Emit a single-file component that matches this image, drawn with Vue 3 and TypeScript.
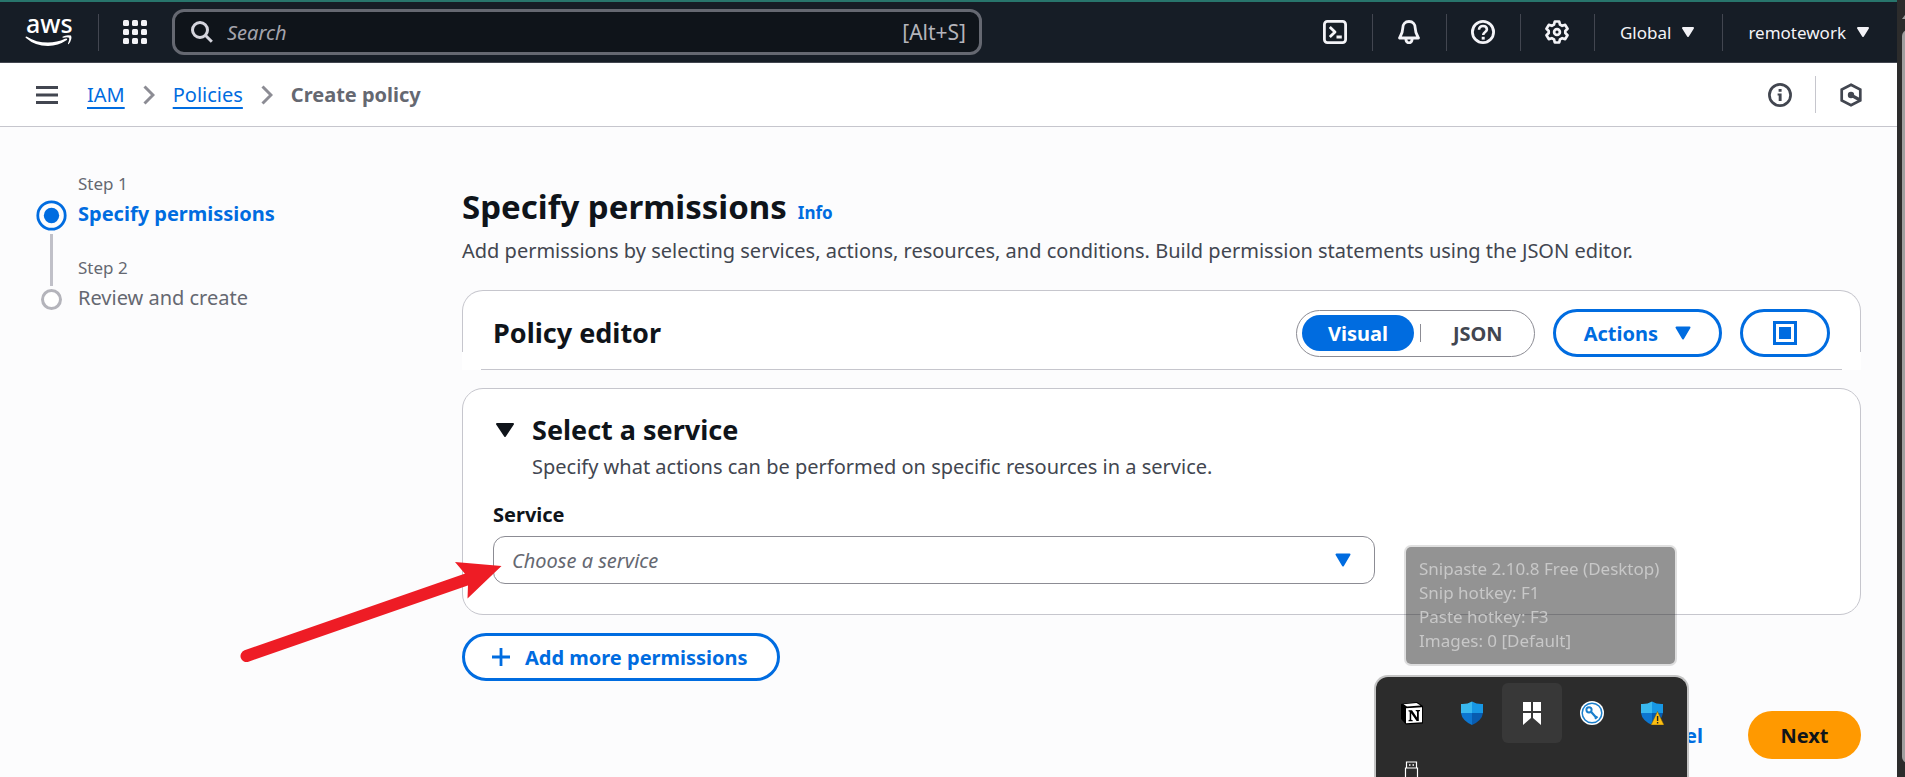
<script setup lang="ts">
import { ref } from 'vue'

interface Step {
  label: string
  title: string
  current: boolean
}

const steps: Step[] = [
  { label: 'Step 1', title: 'Specify permissions', current: true },
  { label: 'Step 2', title: 'Review and create', current: false },
]

const tooltipLines: string[] = [
  'Snipaste 2.10.8 Free (Desktop)',
  'Snip hotkey: F1',
  'Paste hotkey: F3',
  'Images: 0 [Default]',
]

const dots: number[] = [0, 9, 18]
const mode = ref<'visual' | 'json'>('visual')
const query = ref('')
const service = ref('')
</script>

<template>
  <div class="window">
    <div class="page">
      <header class="topbar">
        <a class="logo" href="#" aria-label="AWS home">
          <svg width="48" height="60" viewBox="0 -14 48 60">
            <text class="logo-text" x="1" y="17">aws</text>
            <path d="M0.500 21 Q1 20 2 20.700 Q11 26.500 23 26.600 Q32 26.600 40 22.800 Q42 22 42.200 23.200 Q42.200 23.800 41 24.600 Q33.500 29.800 23 30 Q10 30 1 22 Q0.400 21.500 0.500 21 Z" fill="#fff" />
            <path d="M37.500 20.800 Q41 18.600 46 19.600 Q47.600 23 43.800 28 Q42.900 28.600 43 27.600 Q44.800 23.500 44.200 21.700 Q42.500 20.900 38.200 21.700 Q37 21.600 37.500 20.800 Z" fill="#fff" />
          </svg>
        </a>
        <span class="divider"></span>
        <button class="icon-button apps" type="button" aria-label="Services">
          <svg width="24" height="24" viewBox="0 0 24 24" fill="#f3f3f7">
            <template v-for="y in dots" :key="y">
              <rect v-for="x in dots" :key="x" :x="x" :y="y" width="6" height="6" rx="1.500" />
            </template>
          </svg>
        </button>
        <label class="search">
          <svg width="22" height="22" viewBox="0 0 22 22" fill="none" stroke="#d5d5dd" stroke-width="3">
            <circle cx="9" cy="9" r="7.500" />
            <path d="M14.300 14.300 L20.800 20.800" />
          </svg>
          <input v-model="query" type="text" placeholder="Search" aria-label="Search" />
          <span class="shortcut">[Alt+S]</span>
        </label>

        <div class="tools">
          <button class="tool" type="button" aria-label="CloudShell">
            <svg width="24" height="24" viewBox="0 0 24 24" fill="none" stroke="#f3f3f7" stroke-width="2.800" stroke-linejoin="round">
              <rect x="1.400" y="1.400" width="21.200" height="21.200" rx="3" />
              <path d="M6.800 7 L12 12 L6.800 17 M13.500 17 H18.800" />
            </svg>
          </button>
          <button class="tool" type="button" aria-label="Notifications">
            <svg width="24" height="24" viewBox="0 0 24 24" fill="none" stroke="#f3f3f7" stroke-width="2.800" stroke-linejoin="round">
              <path d="M12 1.500 C8 1.500 5.800 4.300 5.800 8 C5.800 12.500 4.500 14.500 2.500 18 H21.500 C19.500 14.500 18.200 12.500 18.200 8 C18.200 4.300 16 1.500 12 1.500 Z" />
              <path d="M8.800 18.500 C9 21.500 10.500 22.800 12 22.800 C13.500 22.800 15 21.500 15.200 18.500" />
            </svg>
          </button>
          <button class="tool" type="button" aria-label="Help">
            <svg width="24" height="24" viewBox="0 0 24 24" fill="none" stroke="#f3f3f7" stroke-width="2.800">
              <circle cx="12" cy="12" r="10.600" />
              <path d="M8 9.800 C8 7.400 9.700 6 12 6 C14.300 6 15.900 7.400 15.900 9.500 C15.900 12 12.200 12 12.200 15" stroke-width="2.600" />
              <path d="M10.700 16.800 H13.700 V19.600 H10.700 Z" fill="#f3f3f7" stroke="none" />
            </svg>
          </button>
          <button class="tool" type="button" aria-label="Settings">
            <svg width="24" height="24" viewBox="0 0 24 24" fill="none" stroke="#f3f3f7" stroke-width="2.700" stroke-linejoin="round">
              <path d="M9.800 1.500 H14.200 L15 4.600 L17.200 5.800 L20.200 4.900 L22.500 8.700 L20.300 11 V13 L22.500 15.300 L20.200 19.100 L17.200 18.200 L15 19.400 L14.200 22.500 H9.800 L9 19.400 L6.800 18.200 L3.800 19.100 L1.500 15.300 L3.700 13 V11 L1.500 8.700 L3.800 4.900 L6.800 5.800 L9 4.600 Z" />
              <circle cx="12" cy="12" r="2.900" />
            </svg>
          </button>
          <button class="menu" type="button">
            Global
            <svg width="12" height="10" viewBox="0 0 12 10"><path class="tri light" d="M1 1 H11 L6 9 Z" /></svg>
          </button>
          <button class="menu" type="button">
            remotework
            <svg width="12" height="10" viewBox="0 0 12 10"><path class="tri light" d="M1 1 H11 L6 9 Z" /></svg>
          </button>
        </div>
      </header>

      <div class="crumbbar">
        <button class="icon-button" type="button" aria-label="Open navigation">
          <svg width="22" height="18" viewBox="0 0 22 18" fill="#424650">
            <rect width="22" height="3" /><rect y="7.500" width="22" height="3" /><rect y="15" width="22" height="3" />
          </svg>
        </button>
        <nav class="crumbs" aria-label="Breadcrumbs">
          <a href="#">IAM</a>
          <svg width="12" height="20" viewBox="0 0 12 20"><path d="M1.500 1.500 L10 10 L1.500 18.500" /></svg>
          <a href="#">Policies</a>
          <svg width="12" height="20" viewBox="0 0 12 20"><path d="M1.500 1.500 L10 10 L1.500 18.500" /></svg>
          <span>Create policy</span>
        </nav>
        <div class="panel-tools">
          <button class="icon-button" type="button" aria-label="Info panel">
            <svg width="24" height="24" viewBox="0 0 24 24" fill="none" stroke="#424650" stroke-width="2.700">
              <circle cx="12" cy="12" r="10.600" />
              <path d="M10.600 6 H13.600 V8.700 H10.600 Z M9.600 10.600 H13.600 V18 H10.700 V12.600 H9.600 Z" fill="#424650" stroke="none" />
            </svg>
          </button>
          <span class="divider"></span>
          <button class="icon-button" type="button" aria-label="Assistant">
            <svg width="24" height="24" viewBox="0 0 24 24" fill="none" stroke="#424650" stroke-width="2.700">
              <path d="M12 1.700 L21.300 6.600 V17.400 L12 22.300 L2.700 17.400 V6.600 Z" />
              <path d="M12.500 12.300 L21 17" stroke-width="3.200" />
              <circle cx="12" cy="12" r="3.200" fill="#424650" stroke="none" />
            </svg>
          </button>
        </div>
      </div>

      <div class="body">
        <nav class="steps" aria-label="Steps">
          <svg class="rail" width="31" height="111" viewBox="0 0 31 111" fill="none">
            <circle cx="15.500" cy="15.500" r="13.700" stroke="#006ce0" stroke-width="2.800" />
            <circle cx="15.500" cy="15.500" r="7.700" fill="#006ce0" />
            <path d="M15.500 34 V86" stroke="#c0c0c8" stroke-width="3" />
            <circle cx="15.500" cy="99.500" r="9" fill="#fff" stroke="#b4b4bb" stroke-width="3" />
          </svg>
          <ol>
            <li v-for="step in steps" :key="step.label" :class="{ current: step.current }">
              <span class="step-label">{{ step.label }}</span>
              <span class="step-title">{{ step.title }}</span>
            </li>
          </ol>
        </nav>

        <main>
          <div class="heading">
            <h1>Specify permissions</h1>
            <a href="#">Info</a>
          </div>
          <p class="lead">Add permissions by selecting services, actions, resources, and conditions. Build permission statements using the JSON editor.</p>

          <section class="editor">
            <h2>Policy editor</h2>
            <div class="segments">
              <button type="button" :class="{ on: mode === 'visual' }" @click="mode = 'visual'">Visual</button>
              <span></span>
              <button type="button" :class="{ on: mode === 'json' }" @click="mode = 'json'">JSON</button>
            </div>
            <button class="outline actions" type="button">
              Actions
              <svg width="16" height="14" viewBox="0 0 16 14"><path class="tri blue" d="M1.500 1.500 H14.500 L8 12.500 Z" /></svg>
            </button>
            <button class="outline square" type="button" aria-label="Full screen">
              <svg width="24" height="24" viewBox="0 0 24 24" fill="none">
                <rect x="1.500" y="1.500" width="21" height="21" stroke="#006ce0" stroke-width="3" />
                <rect x="6" y="6" width="12" height="12" fill="#006ce0" />
              </svg>
            </button>
          </section>

          <section class="card">
            <div class="card-head">
              <button class="icon-button toggle" type="button" aria-label="Collapse section">
                <svg width="18" height="14" viewBox="0 0 18 14"><path class="tri dark" d="M1 1 H17 L9 13 Z" /></svg>
              </button>
              <h2>Select a service</h2>
            </div>
            <p>Specify what actions can be performed on specific resources in a service.</p>
            <label for="service">Service</label>
            <div class="select">
              <select id="service" v-model="service">
                <option value="">Choose a service</option>
              </select>
              <svg class="select-caret" width="16" height="14" viewBox="0 0 16 14"><path class="tri blue" d="M1.500 1.500 H14.500 L8 12.500 Z" /></svg>
              <svg class="pointer" width="264" height="112" viewBox="0 0 264 112">
                <path d="M6.500 101 L228 24" stroke="#ee1c25" stroke-width="12" stroke-linecap="round" />
                <path d="M261.500 11 L215 7 L226 20 L228 30 L227.500 43.500 Z" fill="#ee1c25" />
              </svg>
            </div>
          </section>

          <button class="outline add" type="button">
            <svg width="18" height="18" viewBox="0 0 18 18"><path d="M9 0 V18 M0 9 H18" stroke="#006ce0" stroke-width="2.800" /></svg>
            Add more permissions
          </button>

          <div class="footer">
            <button class="cancel" type="button">Cancel</button>
            <button class="next" type="button">Next</button>
          </div>
        </main>
      </div>
    </div>

    <div class="scrollbar">
      <svg width="12" height="8" viewBox="0 0 12 8"><path d="M0 8 L6 0 L12 8 Z" fill="#9f9f9f" /></svg>
      <div class="thumb"></div>
    </div>

    <div class="tooltip" role="tooltip">
      <div v-for="line in tooltipLines" :key="line">{{ line }}</div>
    </div>

    <div class="tray">
      <button type="button" aria-label="Notion">
        <svg width="24" height="24" viewBox="0 0 24 24">
          <path d="M1 3 L17 1 L23 5 V22.500 L6 23.500 L1 18 Z" fill="#000" />
          <path d="M3.500 3.200 L16.500 2 L20.500 4.500 L7 5.500 Z M6 7.300 L22 6.300 V21.200 L6 22.300 Z" fill="#fff" />
          <path d="M8.500 9.300 H12 L17 16.500 V10.500 L15.700 10 V9 H20 V10 L18.800 10.500 V20 H16.600 L11.200 12.300 V18.800 L12.700 19.200 V20.200 H8.500 V19.200 L9.700 18.800 V10.800 L8.500 10.300 Z" fill="#000" />
        </svg>
      </button>
      <button type="button" aria-label="Windows Security">
        <svg width="24" height="24" viewBox="0 0 24 24">
          <path d="M1 3 Q7 3.500 12 0.500 V12 H1 Z" fill="#39b8ef" />
          <path d="M12 0.500 Q17 3.500 23 3 V12 H12 Z" fill="#1797e4" />
          <path d="M1 12 H12 V24 Q2 19.500 1 12 Z" fill="#0d76d0" />
          <path d="M12 12 H23 Q22 19.500 12 24 Z" fill="#085cb0" />
        </svg>
      </button>
      <button class="active" type="button" aria-label="Snipaste">
        <svg width="24" height="24" viewBox="0 0 24 24" fill="#fff">
          <path d="M3 1 H11 V10 H3 Z M13 1 H21 V10 H13 Z M3 12 H11 V17 L3 24 Z M13 12 H21 V24 L13 17 Z" />
        </svg>
      </button>
      <button type="button" aria-label="Key manager">
        <svg width="24" height="24" viewBox="0 0 24 24" fill="none">
          <circle cx="12" cy="12" r="12" fill="#fff" />
          <circle cx="12" cy="12" r="9.800" stroke="#1b7fcc" stroke-width="1.500" />
          <circle cx="9" cy="8.800" r="2.600" stroke="#1b7fcc" stroke-width="2" />
          <path d="M11 10.800 L16.800 17.200 M15 17.800 L17.500 15.500" stroke="#1b7fcc" stroke-width="2.200" />
        </svg>
      </button>
      <button type="button" aria-label="Security warning">
        <svg width="24" height="24" viewBox="0 0 24 24">
          <path d="M1 3 Q7 3.500 12 0.500 V12 H1 Z" fill="#39b8ef" />
          <path d="M12 0.500 Q17 3.500 23 3 V12 H12 Z" fill="#1797e4" />
          <path d="M1 12 H12 V24 Q2 19.500 1 12 Z" fill="#0d76d0" />
          <path d="M12 12 H23 Q22 19.500 12 24 Z" fill="#085cb0" />
          <path d="M17.500 10.500 L24 24 H11 Z" fill="#fdbf12" stroke="#7a5a00" stroke-width="0.500" />
          <path d="M16.900 15 H18.300 V20 H16.900 Z M16.900 21 H18.300 V22.500 H16.900 Z" fill="#222" />
        </svg>
      </button>
      <button type="button" aria-label="USB device">
        <svg width="24" height="24" viewBox="0 0 24 24" fill="none" stroke="#fff" stroke-width="1.200">
          <path d="M6.500 1 H16.500 V7 H6.500 Z M5.500 7 H17.500 V23 H5.500 Z" />
          <path d="M9 4 H10.500 M12.500 4 H14" stroke-width="1.600" />
        </svg>
      </button>
    </div>
  </div>
</template>

<style>
body {
  margin: 0;
  overflow: hidden;
}
</style>

<style scoped>
.window {
  display: flex;
  height: 100vh;
  overflow: hidden;
  font-family: "Noto Sans", "Open Sans", sans-serif;
  font-size: 20px;
  color: #424650;
  background: #fcfcfd;
}
.window * {
  box-sizing: border-box;
}
button,
input,
select {
  font: inherit;
  color: inherit;
}
button {
  display: flex;
  align-items: center;
  padding: 0;
  border: 0;
  background: none;
  cursor: pointer;
}
svg {
  display: block;
  flex: none;
}
h1,
h2,
p,
ol {
  margin: 0;
  padding: 0;
}
a {
  color: #006ce0;
}
.page {
  flex: 1;
  min-width: 0;
}
.tri {
  stroke-width: 2;
  stroke-linejoin: round;
}
.light {
  fill: #f3f3f7;
  stroke: #f3f3f7;
}
.blue {
  fill: #006ce0;
  stroke: #006ce0;
}
.dark {
  fill: #0f141a;
  stroke: #0f141a;
}

.topbar {
  display: flex;
  align-items: center;
  height: 63px;
  padding-left: 25px;
  border-top: 2px solid #28756c;
  border-bottom: 1px solid #424650;
  background: #161d26;
  color: #f3f3f7;
}
.logo-text {
  font-size: 25px;
  font-weight: 500;
  fill: #fff;
}
.divider {
  width: 1px;
  height: 37px;
  background: #424650;
}
.logo {
  margin-right: 25px;
}
.apps {
  margin: 0 25px 0 24px;
}
.search {
  display: flex;
  align-items: center;
  flex: 0 1 810px;
  height: 46px;
  padding: 0 13px 0 16px;
  border: 3px solid #656871;
  border-radius: 12px;
  background: #0f141a;
  color: #b4b4bb;
}
.search input {
  flex: 1;
  min-width: 0;
  height: 28px;
  margin-left: 14px;
  padding: 0;
  border: 0;
  outline: 0;
  background: none;
}
.search input::placeholder {
  font-style: italic;
  color: #a4a4ad;
  opacity: 1;
}
.shortcut {
  font-size: 21px;
  line-height: 28px;
}
.tools {
  display: flex;
  align-items: center;
  margin-left: auto;
}
.tool,
.menu {
  height: 37px;
}
.tool {
  justify-content: center;
  width: 74px;
}
.tool,
.menu {
  border-right: 1px solid #424650;
}
.menu {
  gap: 11px;
  padding: 0 28px 0 25px;
  font-size: 17px;
}
.menu:last-child {
  border-right: 0;
}

.crumbbar {
  display: flex;
  align-items: center;
  height: 64px;
  padding: 0 34px 0 36px;
  border-bottom: 1px solid #c6c6cd;
  background: #fff;
}
.crumbs {
  display: flex;
  align-items: center;
  gap: 18px;
  margin-left: 29px;
  line-height: 26px;
}
.crumbs a {
  text-decoration-thickness: 2px;
  text-underline-offset: 5px;
  text-decoration-skip-ink: none;
}
.crumbs path {
  fill: none;
  stroke: #8c8c94;
  stroke-width: 3;
}
.crumbs span {
  font-weight: 700;
  color: #656871;
}
.panel-tools {
  display: flex;
  align-items: center;
  gap: 23px;
  margin-left: auto;
}
.panel-tools .divider {
  background: #c6c6cd;
}

.body {
  display: grid;
  grid-template-columns: 426px minmax(0, 1fr);
  padding: 0 36px;
}
.steps {
  display: flex;
  align-items: flex-start;
  gap: 11px;
  padding-top: 44px;
}
.rail {
  margin-top: 29px;
}
.steps ol {
  display: grid;
  gap: 24px;
  list-style: none;
  color: #656871;
}
.steps li {
  display: grid;
}
.step-label {
  font-size: 17px;
  line-height: 26px;
}
.step-title {
  line-height: 34px;
}
.current .step-title {
  font-weight: 700;
  color: #006ce0;
}

main {
  padding-top: 60px;
}
.heading {
  display: flex;
  align-items: baseline;
  gap: 11px;
}
h1 {
  font-size: 33px;
  line-height: 40px;
  color: #0f141a;
}
.heading a {
  font-size: 17px;
  font-weight: 700;
  text-decoration: none;
}
.lead {
  margin: 9px 0 24px;
  line-height: 30px;
}
h2 {
  font-size: 27px;
  line-height: 34px;
  color: #0f141a;
}
.editor {
  position: relative;
  z-index: 0;
  display: flex;
  align-items: center;
  gap: 18px;
  padding: 18px 30px 13px;
  border: 1px solid #c6c6cd;
  border-bottom: 0;
  border-radius: 21px 21px 0 0;
  background: #fff;
}
.editor::before {
  content: "";
  position: absolute;
  z-index: -1;
  inset: auto -1px 0;
  height: 18px;
  background: #fff;
}
.editor::after {
  content: "";
  position: absolute;
  inset: auto 18px 0;
  height: 1px;
  background: #c6c6cd;
}
.editor h2 {
  margin-right: auto;
}
.segments {
  display: flex;
  align-items: center;
  height: 47px;
  padding: 0 5px;
  border: 1px solid #8c8c94;
  border-radius: 24px;
}
.segments button {
  height: 36px;
  padding: 0 26px;
  border-radius: 18px;
  font-weight: 700;
}
.segments .on {
  background: #006ce0;
  color: #fff;
}
.segments span {
  width: 1px;
  height: 18px;
  margin: 0 6px;
  background: #8c8c94;
}
.outline {
  height: 48px;
  border: 3px solid #006ce0;
  border-radius: 24px;
  background: #fff;
  font-weight: 700;
  color: #006ce0;
}
.actions {
  gap: 17px;
  padding: 0 28px;
}
.square {
  padding: 0 30px;
}

.card {
  margin: 18px 0;
  padding: 24px 30px 30px;
  border: 1px solid #c6c6cd;
  border-radius: 21px;
  background: #fff;
}
.card-head {
  display: flex;
  align-items: center;
  gap: 18px;
  padding-left: 3px;
}
.card p {
  margin: 5px 0 19px 39px;
  line-height: 30px;
}
.card label {
  display: block;
  margin-bottom: 7px;
  line-height: 28px;
  font-weight: 700;
  color: #0f141a;
}
.select {
  position: relative;
  width: 66%;
}
.select select {
  display: block;
  width: 100%;
  height: 48px;
  padding: 0 60px 0 18px;
  border: 1px solid #8c8c94;
  border-radius: 12px;
  appearance: none;
  background: #fff;
  font-style: italic;
  color: #656871;
}
.select-caret {
  position: absolute;
  top: 17px;
  right: 24px;
}
.pointer {
  position: absolute;
  top: 19px;
  right: calc(100% - 11px);
  fill: none;
  pointer-events: none;
}
.add {
  gap: 15px;
  padding: 0 29px 0 27px;
}
.footer {
  display: flex;
  justify-content: flex-end;
  align-items: center;
  gap: 45px;
  margin-top: 30px;
  font-weight: 700;
}
.cancel {
  color: #006ce0;
}
.next {
  justify-content: center;
  width: 113px;
  height: 48px;
  border-radius: 24px;
  background: #ff9900;
  color: #0f141a;
}

.scrollbar {
  width: 8px;
  padding: 11px 0 14px 5px;
  overflow: hidden;
  display: flex;
  flex-direction: column;
  gap: 11px;
  background: #2c2c2c;
}
.thumb {
  flex: 1;
  width: 12px;
  border-radius: 6px;
  background: #9f9f9f;
}
.tooltip {
  position: fixed;
  right: 228px;
  bottom: 111px;
  width: 273px;
  padding: 10px 13px 11px;
  border: 2px solid rgba(0, 0, 0, 0.12);
  border-radius: 7px;
  background: rgba(40, 40, 40, 0.5);
  background-clip: padding-box;
  font-size: 17px;
  line-height: 24px;
  white-space: nowrap;
  color: #c8c8c8;
}
.tray {
  position: fixed;
  right: 216px;
  bottom: 0;
  display: grid;
  grid-template-columns: repeat(5, 60px);
  grid-auto-rows: 60px;
  height: 102px;
  padding: 6px 5px 0 6px;
  border: 2px solid #c4c4c4;
  border-bottom: 0;
  border-radius: 14px 14px 0 0;
  overflow: hidden;
  background: #2c2c2c;
}
.tray button {
  justify-content: center;
  border-radius: 6px;
}
.tray .active {
  background: #383838;
}
</style>
